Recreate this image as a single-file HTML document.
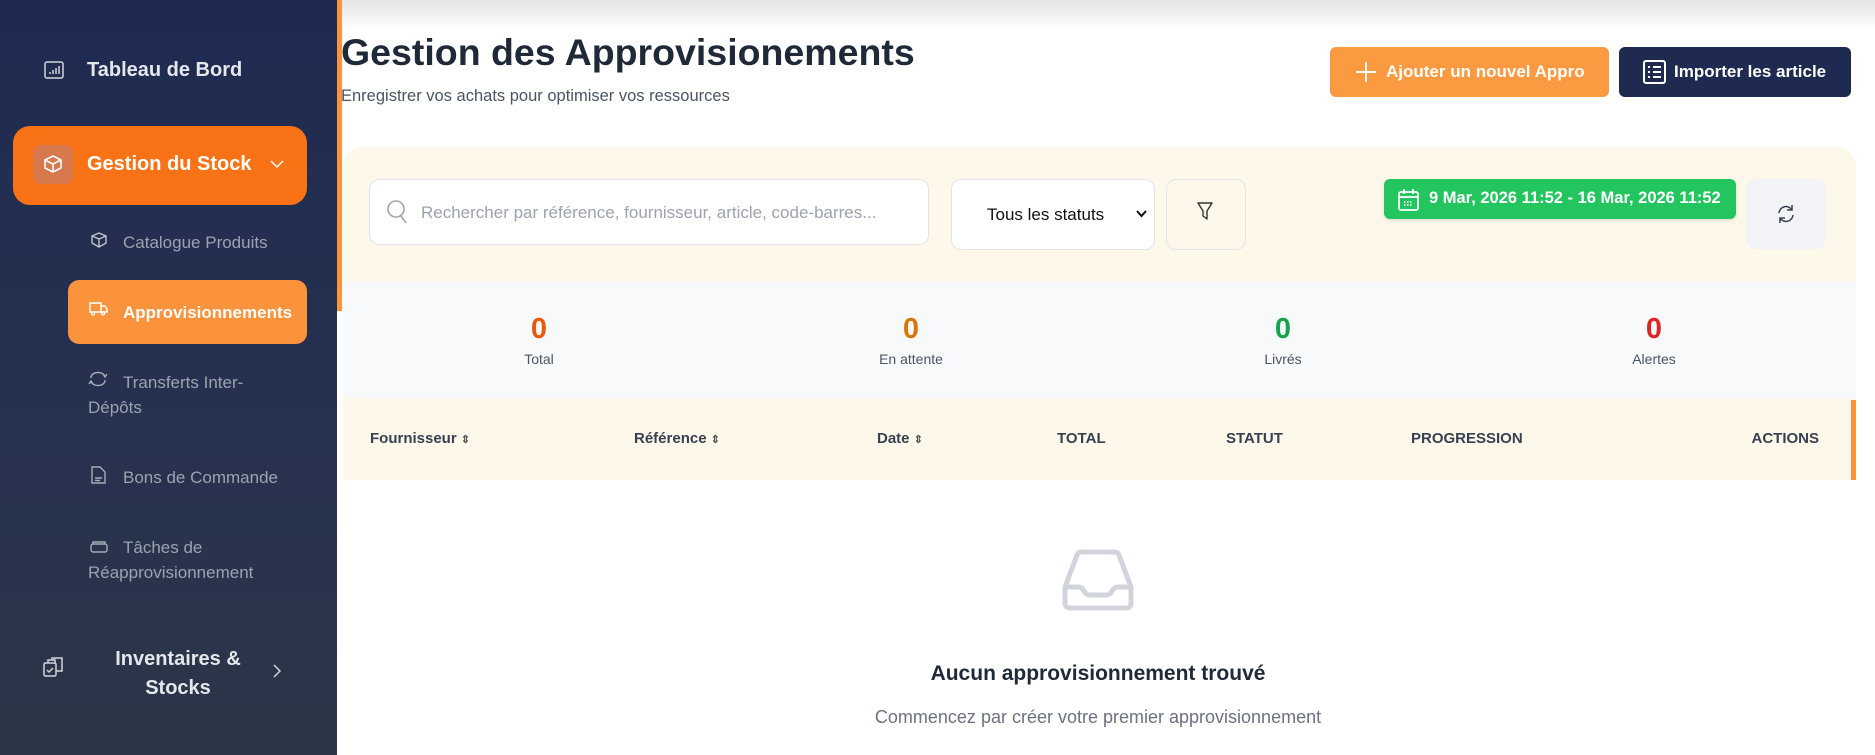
<!DOCTYPE html>
<html><head><meta charset="utf-8"><style>
*{margin:0;padding:0;box-sizing:border-box}
body{width:1875px;height:755px;overflow:hidden;font-family:"Liberation Sans",sans-serif;background:#fff;position:relative}
.abs{position:absolute}
.sb{left:0;top:0;width:337px;height:755px;background:linear-gradient(180deg,#1e2a50 0%,#263150 50%,#2c3648 100%)}
.sbt{color:#e5e7eb;font-weight:bold;font-size:20px;white-space:nowrap}
.sub{color:#9ca3af;font-size:17px;white-space:nowrap}
svg{display:block}
.th{font-weight:bold;font-size:15px;color:#374151;top:430px;white-space:nowrap}
.num{font-weight:bold;font-size:29px;text-align:center;width:200px;top:313px}
.lbl{font-size:14px;color:#4b5563;text-align:center;width:200px;top:351px}
</style></head><body>
<div class="abs sb"></div>
<div class="abs" style="left:337px;top:0;width:5px;height:311px;background:#fb923c"></div>
<svg class="abs" style="left:44px;top:61px" width="20" height="18" viewBox="0 0 20 18" fill="none" stroke="#d1d5db" stroke-width="1.5"><rect x="1" y="1" width="18" height="16" rx="2"/><path d="M6 13v-2M9 13V9M12 13V7M15 13V5"/></svg>
<div class="abs sbt" style="left:87px;top:59px">Tableau de Bord</div>
<div class="abs" style="left:13px;top:126px;width:294px;height:79px;background:#f97316;border-radius:17px"></div>
<div class="abs" style="left:33px;top:145px;width:40px;height:39px;background:#d7794d;border-radius:8px"></div>
<svg class="abs" style="left:43px;top:154px" width="20" height="20" viewBox="0 0 20 20" fill="none" stroke="#fff" stroke-width="1.6" stroke-linejoin="round"><path d="M10 2l8 4v8l-8 4-8-4V6z M2 6l8 4 8-4 M10 10v8"/></svg>
<div class="abs sbt" style="left:87px;top:153px;color:#fff">Gestion du Stock</div>
<svg class="abs" style="left:270px;top:160px" width="14" height="9" viewBox="0 0 14 9" fill="none" stroke="#fff" stroke-width="1.5"><path d="M1 1l6 6 6-6"/></svg>
<svg class="abs" style="left:90px;top:232px" width="18" height="16" viewBox="0 0 18 16" fill="none" stroke="#c0c4cc" stroke-width="1.4" stroke-linejoin="round"><path d="M9 1l7 3v7l-7 4-7-4V4z M2 4l7 3 7-3 M9 7v8"/></svg>
<div class="abs sub" style="left:123px;top:233px">Catalogue Produits</div>
<div class="abs" style="left:68px;top:280px;width:239px;height:64px;background:#fb923c;border-radius:11px"></div>
<svg class="abs" style="left:89px;top:302px" width="19" height="14" viewBox="0 0 19 14" fill="none" stroke="#fff" stroke-width="1.4"><path d="M1 1h11v9H1z M12 4h4l2 3v3h-6"/><circle cx="4" cy="11.5" r="1.5"/><circle cx="14" cy="11.5" r="1.5"/></svg>
<div class="abs sub" style="left:123px;top:303px;color:#fff;font-weight:bold">Approvisionnements</div>
<svg class="abs" style="left:88px;top:371px" width="20" height="16" viewBox="0 0 20 16" fill="none" stroke="#a6abb5" stroke-width="1.4"><path d="M3 7a7 5 0 0 1 14-1M17 9a7 5 0 0 1-14 1M15 3l2 3 2-3M1 13l2-3 2 3"/></svg>
<div class="abs sub" style="left:123px;top:373px">Transferts Inter-</div>
<div class="abs sub" style="left:88px;top:398px">Dépôts</div>
<svg class="abs" style="left:91px;top:466px" width="15" height="18" viewBox="0 0 15 18" fill="none" stroke="#a6abb5" stroke-width="1.4"><path d="M1 1h8l5 5v11H1z M4 12h7M4 14.5h5"/></svg>
<div class="abs sub" style="left:123px;top:468px">Bons de Commande</div>
<svg class="abs" style="left:90px;top:540px" width="18" height="13" viewBox="0 0 18 13" fill="none" stroke="#a6abb5" stroke-width="1.4"><rect x="1" y="4" width="16" height="8" rx="2"/><path d="M3 4V2h12v2"/></svg>
<div class="abs sub" style="left:123px;top:538px">Tâches de</div>
<div class="abs sub" style="left:88px;top:563px">Réapprovisionnement</div>
<svg class="abs" style="left:43px;top:657px" width="20" height="20" viewBox="0 0 20 20" fill="none" stroke="#d1d5db" stroke-width="1.5"><rect x="1" y="6" width="12" height="13" rx="1.5"/><path d="M5 6V3h7v3M9 3V1h10v13h-6"/><path d="M4 13l2 2 4-4"/></svg>
<div class="abs sbt" style="left:98px;top:645px;width:160px;text-align:center;line-height:29px;white-space:normal">Inventaires &amp;<br>Stocks</div>
<svg class="abs" style="left:273px;top:664px" width="8" height="14" viewBox="0 0 8 14" fill="none" stroke="#d1d5db" stroke-width="1.5"><path d="M1 1l6 6-6 6"/></svg>

<div class="abs" style="left:342px;top:0;width:1533px;height:30px;background:linear-gradient(180deg,#e4e4e4,#fff)"></div>
<div class="abs" style="left:341px;top:31px;font-size:37.5px;font-weight:bold;color:#1f2937;white-space:nowrap">Gestion des Approvisionements</div>
<div class="abs" style="left:341px;top:87px;font-size:16.5px;color:#4b5563;white-space:nowrap">Enregistrer vos achats pour optimiser vos ressources</div>
<div class="abs" style="left:1330px;top:47px;width:279px;height:50px;background:#fb9a40;border-radius:6px"></div>
<svg class="abs" style="left:1355px;top:61px" width="22" height="22" viewBox="0 0 22 22" stroke="#fff" stroke-width="2"><path d="M11 1v20M1 11h20"/></svg>
<div class="abs" style="left:1386px;top:62px;font-size:17px;font-weight:bold;color:#fff;white-space:nowrap">Ajouter un nouvel Appro</div>
<div class="abs" style="left:1619px;top:47px;width:232px;height:50px;background:#1e2a4f;border-radius:6px"></div>
<svg class="abs" style="left:1643px;top:60px" width="23" height="24" viewBox="0 0 23 24" fill="none" stroke="#fff" stroke-width="2"><rect x="1" y="1" width="21" height="22" rx="2"/><path d="M5 7h2M10 7h8M5 12h2M10 12h8M5 17h2M10 17h8"/></svg>
<div class="abs" style="left:1674px;top:62px;font-size:17px;font-weight:bold;color:#fff;white-space:nowrap">Importer les article</div>
<div class="abs" style="left:343px;top:147px;width:1513px;height:135px;background:#fef8ea;border-radius:20px 20px 0 0"></div>
<div class="abs" style="left:369px;top:179px;width:560px;height:66px;background:#fff;border:1px solid #e2e4e8;border-radius:10px"></div>
<svg class="abs" style="left:386px;top:199px" width="22" height="26" viewBox="0 0 22 26" fill="none" stroke="#9ca3af" stroke-width="1.6"><circle cx="10" cy="10" r="8"/><path d="M15 17l5 7"/></svg>
<div class="abs" style="left:421px;top:203px;font-size:17px;color:#9ca3af;white-space:nowrap">Rechercher par référence, fournisseur, article, code-barres...</div>
<div class="abs" style="left:951px;top:179px;width:204px;height:71px;background:#fff;border:1px solid #e2e4e8;border-radius:10px"></div>
<div class="abs" style="left:987px;top:205px;font-size:17px;color:#111;white-space:nowrap">Tous les statuts</div>
<svg class="abs" style="left:1136px;top:210px" width="11" height="8" viewBox="0 0 11 8" fill="none" stroke="#111" stroke-width="2"><path d="M1 1l4.5 5L10 1"/></svg>
<div class="abs" style="left:1166px;top:179px;width:80px;height:71px;background:#fef8ea;border:1px solid #e2e4e8;border-radius:10px"></div>
<svg class="abs" style="left:1197px;top:202px" width="16" height="19" viewBox="0 0 16 19" fill="none" stroke="#333" stroke-width="1.4" stroke-linejoin="round"><path d="M1 1h14l-5 8v8l-4-3V9z"/></svg>
<div class="abs" style="left:1384px;top:179px;width:352px;height:40px;background:#22c55e;border-radius:6px;box-shadow:0 2px 4px rgba(0,0,0,.1)"></div>
<svg class="abs" style="left:1398px;top:188px" width="21" height="23" viewBox="0 0 21 23" fill="none" stroke="#fff" stroke-width="1.8"><rect x="1" y="4" width="19" height="18" rx="2"/><path d="M6 1v5M15 1v5M1 9h19"/><path d="M6 14h9M6 17h9" stroke-dasharray="1.5 1.5"/></svg>
<div class="abs" style="left:1429px;top:189px;font-size:16.5px;font-weight:bold;color:#fff;white-space:nowrap">9 Mar, 2026 11:52 - 16 Mar, 2026 11:52</div>
<div class="abs" style="left:1746px;top:179px;width:80px;height:70px;background:#f1f3f6;border-radius:10px"></div>
<svg class="abs" style="left:1777px;top:204px" width="18" height="20" viewBox="0 0 18 20" fill="none" stroke="#374151" stroke-width="1.5"><path d="M2 9a7 7 0 0 1 13-3M16 11a7 7 0 0 1-13 3M15 1v5h-5M3 19v-5h5"/></svg>
<div class="abs" style="left:343px;top:282px;width:1513px;height:116px;background:#f8f9fb"></div>
<div class="abs num" style="left:439px;color:#ea580c">0</div><div class="abs lbl" style="left:439px">Total</div>
<div class="abs num" style="left:811px;color:#d97706">0</div><div class="abs lbl" style="left:811px">En attente</div>
<div class="abs num" style="left:1183px;color:#16a34a">0</div><div class="abs lbl" style="left:1183px">Livrés</div>
<div class="abs num" style="left:1554px;color:#dc2626">0</div><div class="abs lbl" style="left:1554px">Alertes</div>
<div class="abs" style="left:343px;top:398px;width:1513px;height:82px;background:#fef8ea"></div>
<div class="abs" style="left:1851px;top:400px;width:5px;height:80px;background:#fb923c"></div>
<div class="abs th" style="left:370px">Fournisseur <span style="font-size:11px;color:#555">⇕</span></div>
<div class="abs th" style="left:634px">Référence <span style="font-size:11px;color:#555">⇕</span></div>
<div class="abs th" style="left:877px">Date <span style="font-size:11px;color:#555">⇕</span></div>
<div class="abs th" style="left:1057px">TOTAL</div>
<div class="abs th" style="left:1226px">STATUT</div>
<div class="abs th" style="left:1411px">PROGRESSION</div>
<div class="abs th" style="left:1750px;width:69px;text-align:right">ACTIONS</div>
<svg class="abs" style="left:1062px;top:549px" width="72" height="62" viewBox="0 0 72 62" fill="none" stroke="#d1d5db" stroke-width="5" stroke-linejoin="round"><path d="M3 38L15 6Q16 3 20 3h32q4 0 5 3l12 32v16q0 5-5 5H8q-5 0-5-5z"/><path d="M3 38h13q4 0 6 4t6 4h16q4 0 6-4t6-4h13"/></svg>
<div class="abs" style="left:800px;top:662px;width:596px;text-align:center;font-size:21px;font-weight:bold;color:#1f2937">Aucun approvisionnement trouvé</div>
<div class="abs" style="left:750px;top:707px;width:696px;text-align:center;font-size:18px;color:#6b7280">Commencez par créer votre premier approvisionnement</div>
</body></html>
